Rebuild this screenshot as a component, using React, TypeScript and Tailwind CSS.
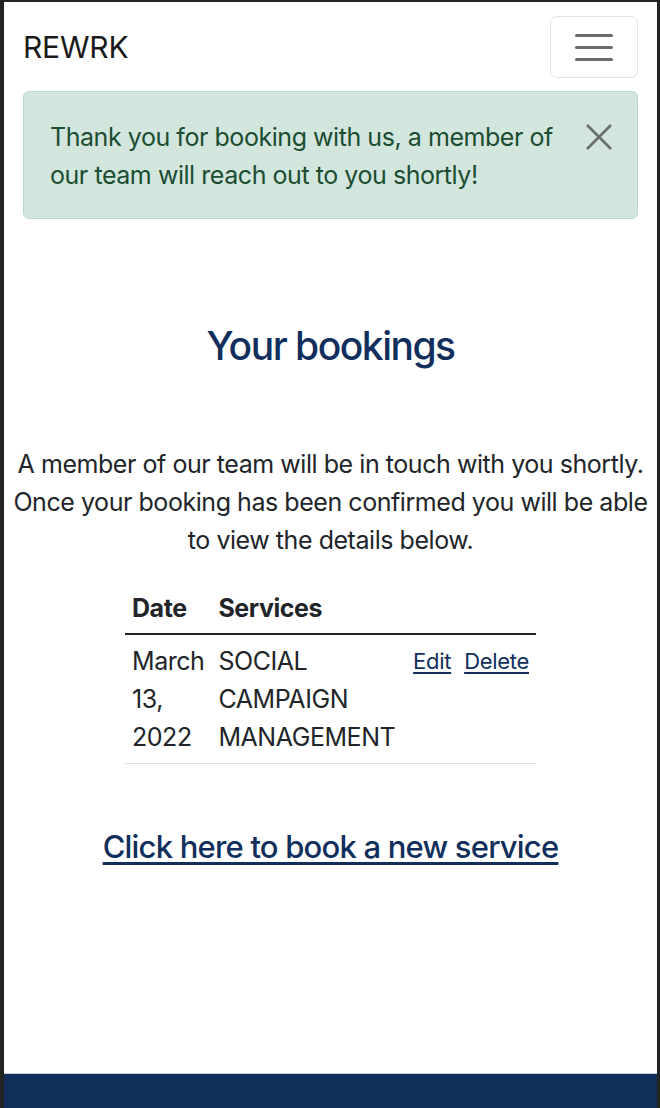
import React from "react";

const navy = "text-[#102f5c]";

function Navbar() {
  return (
    <nav className="flex items-center justify-between pt-[14px] pb-[13px]">
      <a href="#" className="text-[30px] leading-[36px] text-[#1a1a1a] tracking-[-0.2px]">
        REWRK
      </a>
      <button
        type="button"
        aria-label="Toggle navigation"
        className="flex h-[62px] w-[88px] flex-col items-center justify-center gap-[9px] rounded-[7px] border border-[#e2e2e2] bg-white"
      >
        <span className="block h-[3px] w-[38px] rounded-full bg-[#6b6b6b]" />
        <span className="block h-[3px] w-[38px] rounded-full bg-[#6b6b6b]" />
        <span className="block h-[3px] w-[38px] rounded-full bg-[#6b6b6b]" />
      </button>
    </nav>
  );
}

function Alert() {
  return (
    <div className="relative rounded-[6px] border border-[#badbcc] bg-[#d3e6dd] pt-[26px] pb-[24px] pl-[26px] pr-[76px] text-[25px] leading-[38px] tracking-[-0.45px] text-[#1b4d31]">
      Thank you for booking with us, a member of our team will reach out to you shortly!
      <button
        type="button"
        aria-label="Close"
        className="absolute right-[24px] top-[31px] flex h-[28px] w-[28px] items-center justify-center"
      >
        <svg width="26" height="26" viewBox="0 0 26 26">
          <path d="M1 1 L25 25 M25 1 L1 25" stroke="#6a6e6c" strokeWidth="2.6" />
        </svg>
      </button>
    </div>
  );
}

function BookingsTable() {
  return (
    <table className="mx-auto w-[411px] border-collapse text-left text-[25px] leading-[38px] tracking-[-0.45px] text-[#212529]">
      <thead>
        <tr className="border-b-2 border-[#212529]">
          <th className="w-[86px] px-[7px] pt-[7px] pb-[6px] font-bold">Date</th>
          <th className="w-[193px] px-[7px] pt-[7px] pb-[6px] font-bold">Services</th>
          <th className="px-[7px] pt-[7px] pb-[6px]" />
        </tr>
      </thead>
      <tbody>
        <tr className="border-b border-[#dee2e6] align-top">
          <td className="px-[7px] py-[7px]">March 13, 2022</td>
          <td className="px-[7px] py-[7px]">SOCIAL CAMPAIGN MANAGEMENT</td>
          <td className="px-[7px] py-[7px] text-right text-[22px] tracking-[-0.3px]">
            <a href="#" className={`${navy} underline underline-offset-[3px]`}>
              Edit
            </a>
            <a href="#" className={`${navy} ml-[13px] underline underline-offset-[3px]`}>
              Delete
            </a>
          </td>
        </tr>
      </tbody>
    </table>
  );
}

export default function App() {
  return (
    <div
      className="h-[1108px] overflow-hidden border-t-2 border-l-4 border-r-[3px] border-[#232323] bg-white"
      style={{ fontFamily: "Inter, 'Noto Sans', sans-serif" }}
    >
      <div className="flex h-full flex-col">
        <div className="h-[1071px] px-[19px]">
          <Navbar />
          <Alert />
          <h1 className={`mt-[103px] text-center text-[39px] leading-[47px] font-medium tracking-[-1.5px] ${navy}`}>
            Your bookings
          </h1>
          <p className="mt-[76px] -mx-[19px] text-center text-[25px] leading-[38px] tracking-[-0.45px] text-[#212529]">
            A member of our team will be in touch with you shortly. Once your booking has been confirmed you will be
            able to view the details below.
          </p>
          <div className="mt-[23px]">
            <BookingsTable />
          </div>
          <div className="mt-[60px] text-center">
            <a
              href="#"
              className={`text-[31px] leading-[46px] font-medium tracking-[-0.8px] underline underline-offset-[4px] ${navy}`}
            >
              Click here to book a new service
            </a>
          </div>
        </div>
        <footer className="flex-1 border-t border-[#c9ccd1] bg-[#112e5b]" />
      </div>
    </div>
  );
}
